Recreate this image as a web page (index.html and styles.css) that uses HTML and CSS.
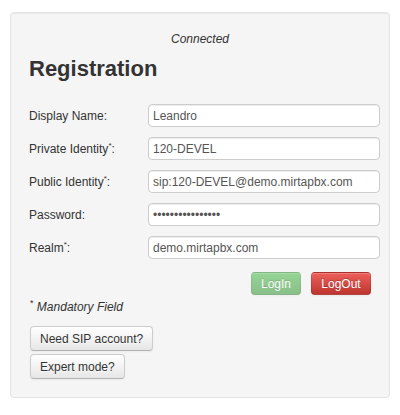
FILE: index.html
```html
<!DOCTYPE html>
<html>
<head>
<meta charset="utf-8">
<link rel="stylesheet" href="styles.css">
</head>
<body>
<div class="panel">
  <div class="status">Connected</div>
  <h2 class="title">Registration</h2>
  <div class="form">
    <label class="lbl">Display Name:</label>
    <input class="field" type="text" value="Leandro">
    <label class="lbl">Private Identity<sup class="req">*</sup>:</label>
    <input class="field" type="text" value="120-DEVEL">
    <label class="lbl">Public Identity<sup class="req">*</sup>:</label>
    <input class="field" type="text" value="sip:120-DEVEL@demo.mirtapbx.com">
    <label class="lbl">Password:</label>
    <input class="field" type="password" value="abcdefghijklmnop">
    <label class="lbl">Realm<sup class="req">*</sup>:</label>
    <input class="field" type="text" value="demo.mirtapbx.com">
  </div>
  <div class="actions">
    <button class="btn btn-success" disabled>LogIn</button>
    <button class="btn btn-danger">LogOut</button>
  </div>
  <div class="note"><sup class="req">*</sup> <i>Mandatory Field</i></div>
  <div class="extra">
    <button class="btn btn-default">Need SIP account?</button>
    <button class="btn btn-default">Expert mode?</button>
  </div>
</div>
</body>
</html>
```
FILE: styles.css
```css
html, body {
  margin: 0;
  padding: 0;
  background: #ffffff;
}
body {
  font-family: "Liberation Sans", Arial, sans-serif;
  font-size: 12px;
  line-height: 16px;
  color: #333333;
}
.panel {
  box-sizing: border-box;
  margin: 12px 0 0 10px;
  width: 380px;
  height: 386px;
  background: #f5f5f5;
  border: 1px solid #e3e3e3;
  border-radius: 4px;
  box-shadow: inset 0 1px 1px rgba(0, 0, 0, 0.05);
  padding: 18px 9px 0 18px;
}
.status {
  text-align: center;
  font-style: italic;
  margin-left: -9px;
}
.title {
  margin: 9px 0 22px 0;
  font-size: 22px;
  line-height: 26px;
  font-weight: bold;
  color: #333333;
}
.form {
  display: grid;
  grid-template-columns: 119px 232px;
  row-gap: 10px;
  align-items: center;
}
.lbl {
  color: #333333;
}
.req {
  font-size: 8px;
  line-height: 0;
  vertical-align: 5px;
}
.field {
  box-sizing: border-box;
  height: 23px;
  width: 232px;
  margin: 0;
  padding: 2px 4px;
  font-family: "Liberation Sans", Arial, sans-serif;
  font-size: 12px;
  color: #555555;
  background: #ffffff;
  border: 1px solid #cccccc;
  border-radius: 4px;
  box-shadow: inset 0 1px 1px rgba(0, 0, 0, 0.075);
  outline: none;
}
.actions {
  display: flex;
  justify-content: flex-end;
  gap: 10px;
  margin-top: 13px;
  padding-right: 9px;
}
.btn {
  box-sizing: border-box;
  margin: 0;
  font-family: "Liberation Sans", Arial, sans-serif;
  font-size: 12px;
  line-height: 16px;
  border-radius: 4px;
  cursor: pointer;
}
.btn-success,
.btn-danger {
  height: 23px;
  color: #ffffff;
  text-shadow: 0 -1px 0 rgba(0, 0, 0, 0.25);
  border: 1px solid rgba(0, 0, 0, 0.1);
  border-bottom-color: rgba(0, 0, 0, 0.25);
  box-shadow: inset 0 1px 0 rgba(255, 255, 255, 0.2), 0 1px 2px rgba(0, 0, 0, 0.05);
}
.btn-success {
  background: linear-gradient(#62c462, #51a351);
  opacity: 0.65;
  width: 50px;
  padding: 2px 0;
}
.btn-danger {
  background: linear-gradient(#ee5f5b, #bd362f);
  width: 60px;
  padding: 2px 0;
}
.note {
  margin-top: 4px;
  padding-left: 1px;
  color: #333333;
}
.note .req {
  font-size: 9px;
}
.extra {
  display: flex;
  flex-direction: column;
  align-items: flex-start;
  gap: 3px;
  margin-top: 11px;
  padding-left: 1px;
}
.btn-default {
  height: 25px;
  padding: 3px 9px;
  color: #333333;
  text-shadow: 0 1px 1px rgba(255, 255, 255, 0.75);
  background: linear-gradient(#ffffff, #e6e6e6);
  border: 1px solid #cccccc;
  border-bottom-color: #b3b3b3;
  box-shadow: inset 0 1px 0 rgba(255, 255, 255, 0.2), 0 1px 2px rgba(0, 0, 0, 0.05);
}
```
